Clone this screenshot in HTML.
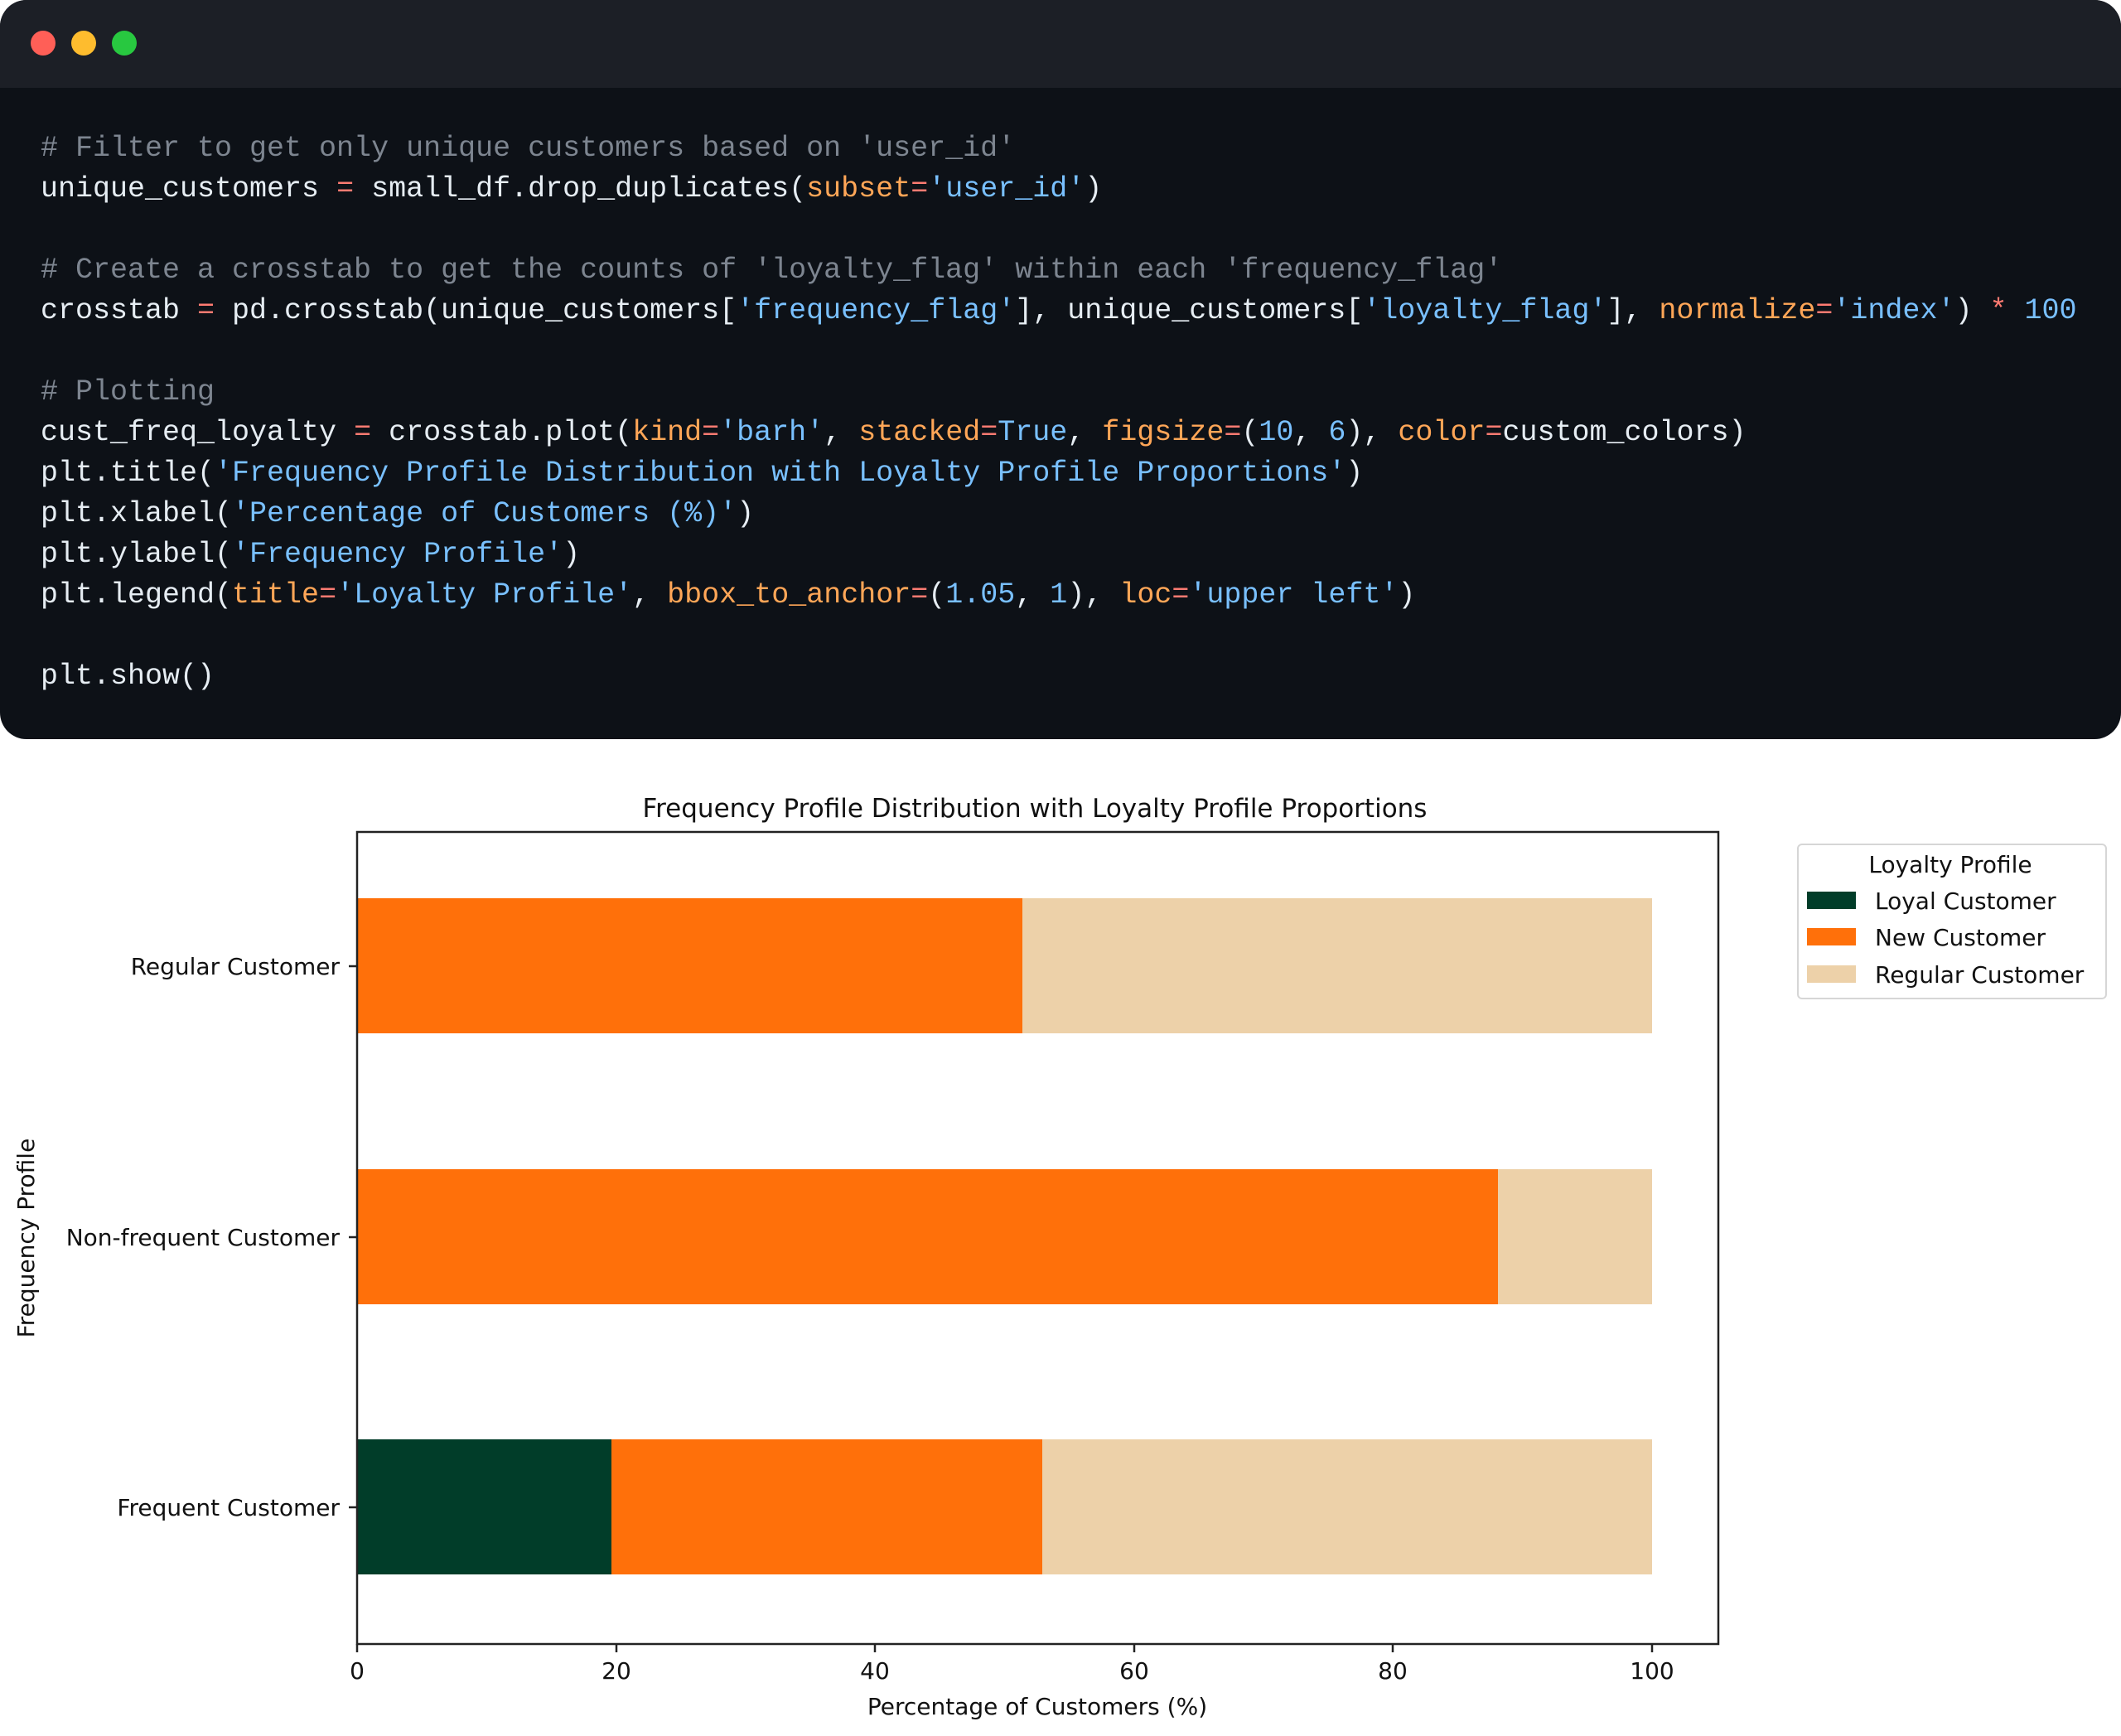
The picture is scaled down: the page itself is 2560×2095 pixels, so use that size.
<!DOCTYPE html>
<html><head><meta charset="utf-8"><style>
html,body{margin:0;padding:0;background:#fff;width:2560px;height:2095px;overflow:hidden}
.win{position:absolute;left:0;top:0;width:2560px;height:892px;background:#0d1117;border-radius:32px;overflow:hidden}
.bar{position:absolute;left:0;top:0;width:100%;height:106px;background:#1c1f26}
.dot{position:absolute;top:37px;width:30px;height:30px;border-radius:50%}
pre{position:absolute;left:49px;top:155px;margin:0;font-family:"Liberation Mono",monospace;font-size:35px;line-height:49px;color:#e6edf3;letter-spacing:0}
.c{color:#7d8590}.o{color:#ff7b72}.k{color:#ffa657}.s{color:#79c0ff}
.chart{position:absolute;left:0;top:0;font-family:"DejaVu Sans","Liberation Sans",sans-serif}
</style></head><body>
<div class="win"><div class="bar">
<div class="dot" style="left:37px;background:#ff5f57"></div>
<div class="dot" style="left:86px;background:#febc2e"></div>
<div class="dot" style="left:135px;background:#28c840"></div></div>
<pre><span class="c"># Filter to get only unique customers based on 'user_id'</span>
unique_customers <span class="o">=</span> small_df.drop_duplicates(<span class="k">subset</span><span class="o">=</span><span class="s">'user_id'</span>)

<span class="c"># Create a crosstab to get the counts of 'loyalty_flag' within each 'frequency_flag'</span>
crosstab <span class="o">=</span> pd.crosstab(unique_customers[<span class="s">'frequency_flag'</span>], unique_customers[<span class="s">'loyalty_flag'</span>], <span class="k">normalize</span><span class="o">=</span><span class="s">'index'</span>) <span class="o">*</span> <span class="s">100</span>

<span class="c"># Plotting</span>
cust_freq_loyalty <span class="o">=</span> crosstab.plot(<span class="k">kind</span><span class="o">=</span><span class="s">'barh'</span>, <span class="k">stacked</span><span class="o">=</span><span class="s">True</span>, <span class="k">figsize</span><span class="o">=</span>(<span class="s">10</span>, <span class="s">6</span>), <span class="k">color</span><span class="o">=</span>custom_colors)
plt.title(<span class="s">'Frequency Profile Distribution with Loyalty Profile Proportions'</span>)
plt.xlabel(<span class="s">'Percentage of Customers (%)'</span>)
plt.ylabel(<span class="s">'Frequency Profile'</span>)
plt.legend(<span class="k">title</span><span class="o">=</span><span class="s">'Loyalty Profile'</span>, <span class="k">bbox_to_anchor</span><span class="o">=</span>(<span class="s">1.05</span>, <span class="s">1</span>), <span class="k">loc</span><span class="o">=</span><span class="s">'upper left'</span>)

plt.show()</pre></div>
<svg class="chart" width="2560" height="2095" viewBox="0 0 2560 2095" font-family="DejaVu Sans, Liberation Sans, sans-serif">
<text x="1249" y="986" font-size="31" text-anchor="middle" fill="#111">Frequency Profile Distribution with Loyalty Profile Proportions</text>
<!-- bars -->
<rect x="431" y="1084" width="803" height="163" fill="#ff700a"/>
<rect x="1234" y="1084" width="760" height="163" fill="#edd1a9"/>
<rect x="431" y="1411" width="1377" height="163" fill="#ff700a"/>
<rect x="1808" y="1411" width="186" height="163" fill="#edd1a9"/>
<rect x="431" y="1737" width="307" height="163" fill="#013d29"/>
<rect x="738" y="1737" width="520" height="163" fill="#ff700a"/>
<rect x="1258" y="1737" width="736" height="163" fill="#edd1a9"/>
<rect x="431" y="1004" width="1643" height="980" fill="none" stroke="#222" stroke-width="2.5"/>
<g stroke="#222" stroke-width="2.5">
<line x1="421" y1="1166" x2="431" y2="1166"/><line x1="421" y1="1493" x2="431" y2="1493"/><line x1="421" y1="1819" x2="431" y2="1819"/>
<line x1="431" y1="1984" x2="431" y2="1994"/><line x1="744" y1="1984" x2="744" y2="1994"/><line x1="1056" y1="1984" x2="1056" y2="1994"/><line x1="1369" y1="1984" x2="1369" y2="1994"/><line x1="1681" y1="1984" x2="1681" y2="1994"/><line x1="1994" y1="1984" x2="1994" y2="1994"/>
</g>
<g font-size="28" fill="#111" text-anchor="end">
<text x="410" y="1176">Regular Customer</text>
<text x="410" y="1503">Non-frequent Customer</text>
<text x="410" y="1829">Frequent Customer</text>
</g>
<g font-size="28" fill="#111" text-anchor="middle">
<text x="431" y="2026">0</text><text x="744" y="2026">20</text><text x="1056" y="2026">40</text><text x="1369" y="2026">60</text><text x="1681" y="2026">80</text><text x="1994" y="2026">100</text>
<text x="1252" y="2069">Percentage of Customers (%)</text>
<text transform="translate(41,1494) rotate(-90)">Frequency Profile</text>
</g>
<rect x="2170" y="1019" width="372" height="186" rx="5" fill="#fff" stroke="#d6d6d6" stroke-width="2"/>
<g font-size="28" fill="#111">
<text x="2354" y="1053" text-anchor="middle">Loyalty Profile</text>
<rect x="2181" y="1076" width="59" height="21" fill="#013d29"/><text x="2263" y="1097">Loyal Customer</text>
<rect x="2181" y="1120" width="59" height="21" fill="#ff700a"/><text x="2263" y="1141">New Customer</text>
<rect x="2181" y="1165" width="59" height="21" fill="#edd1a9"/><text x="2263" y="1186">Regular Customer</text>
</g>
</svg>
</body></html>
